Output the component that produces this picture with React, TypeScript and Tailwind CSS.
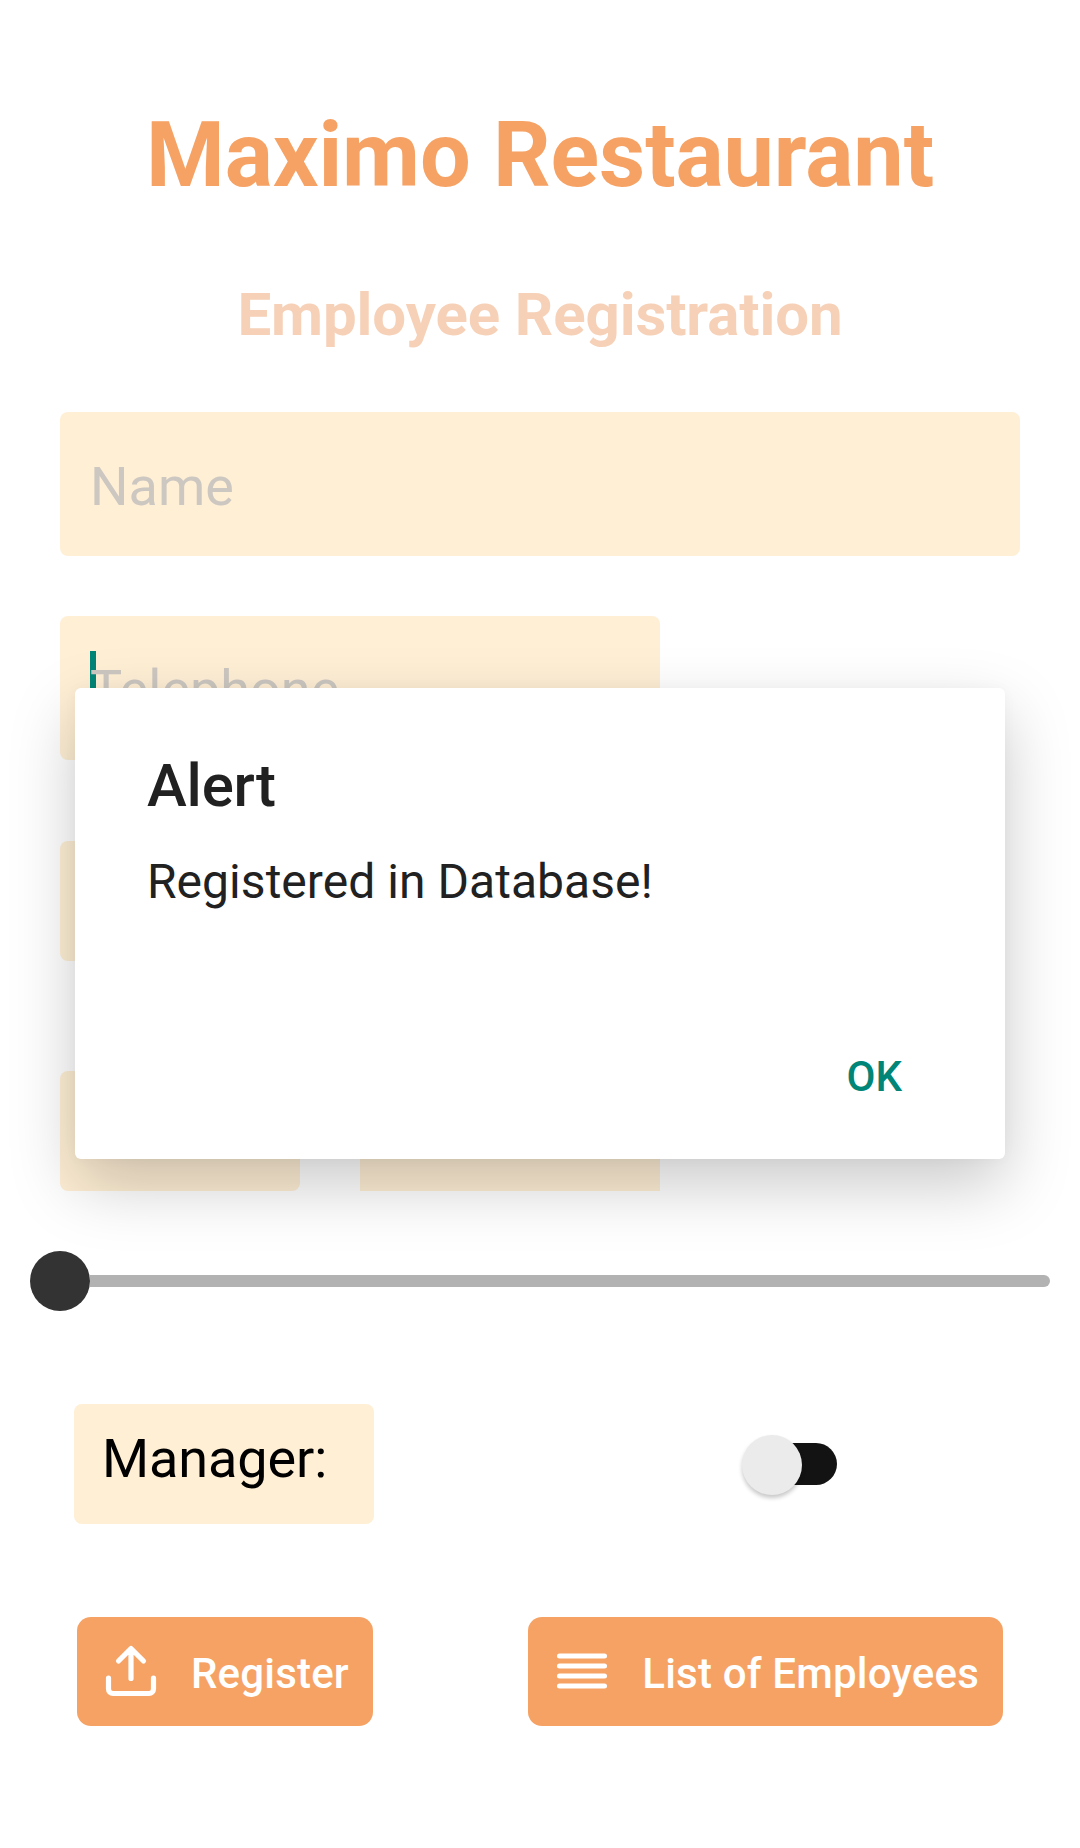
import type { ReactNode } from "react";

function UploadIcon() {
  return (
    <svg className="-mt-px" width="60" height="60" viewBox="0 0 60 60" fill="none" stroke="white" strokeWidth="5.2" strokeLinecap="round" strokeLinejoin="round">
      <path d="M7.5 37V48A4.5 4.5 0 0 0 12 52.5H48A4.5 4.5 0 0 0 52.5 48V37" />
      <path d="M30 37.5V8M17.5 20L30 7.5L42.5 20" />
      <path d="M30 9L25 14H35Z" fill="white" stroke="none" />
    </svg>
  );
}

function ListIcon() {
  return (
    <svg className="-mt-px" width="60" height="60" viewBox="0 0 60 60" fill="none" stroke="white" strokeWidth="5" strokeLinecap="round">
      <path d="M7.5 15H52.5M7.5 25H52.5M7.5 35H52.5M7.5 45H52.5" />
    </svg>
  );
}

function ActionButton({ icon, children }: { icon: ReactNode; children: ReactNode }) {
  return (
    <button className="flex h-[109px] items-center rounded-[14px] bg-[#f6a264] pr-6 pl-6 text-[42px] leading-[50px] font-medium tracking-[0.18px] text-white">
      {icon}
      <span className="ml-[30px] pt-1 whitespace-nowrap">{children}</span>
    </button>
  );
}

function Slider() {
  return (
    <div className="mx-[30px] mt-[60px] flex h-[60px] items-center">
      <div className="size-[60px] shrink-0 rounded-full bg-[#333333]" />
      <div className="h-3 flex-1 rounded-r-full bg-[#b2b2b2]" />
    </div>
  );
}

function Switch() {
  return (
    <div className="flex h-[42px] w-[90px] items-center rounded-full bg-[#131313]">
      <div className="mt-px -ml-[5px] size-[60px] shrink-0 rounded-full bg-[#ebebeb] shadow-[0_3px_4px_rgba(0,0,0,0.22)]" />
    </div>
  );
}

function AlertDialog() {
  return (
    <div className="absolute inset-x-[75px] top-[688px] flex h-[471px] flex-col rounded-[6px] bg-white px-[72px] text-[#212121] shadow-[0_26px_66px_rgba(0,0,0,0.21),0_0_14px_rgba(0,0,0,0.03)]">
      <h3 className="mt-[63px] text-[60px] leading-[70px] font-medium tracking-[-0.2px]">Alert</h3>
      <p className="mt-[33px] text-[48px] leading-[56px] tracking-[0.04px]">Registered in Database!</p>
      <button className="mt-[142px] mr-[31px] self-end text-[42px] leading-[50px] font-medium text-[#008577]">OK</button>
    </div>
  );
}

export default function App() {
  return (
    <main className="relative h-[1848px] w-[1080px] overflow-hidden bg-white font-['Roboto',sans-serif]">
      <h1 className="pt-[103px] text-center text-[90px] leading-[106px] font-bold tracking-[-0.1px] text-[#f6a264]">Maximo Restaurant</h1>
      <h2 className="mt-[71px] text-center text-[60px] leading-[70px] font-bold tracking-[-0.1px] text-[#f6d1b7]">Employee Registration</h2>

      <div className="mt-[62px] flex flex-col px-[60px]">
        <div className="flex h-36 items-center rounded-[8px] bg-[#ffefd5] px-[30px] pt-1 text-[54px] text-[#ccc7c1]">Name</div>
        <div className="mt-[60px] flex h-36 w-[600px] items-center rounded-[8px] bg-[#ffefd5] px-[30px] text-[54px] text-[#ccc7c1]">
          <span className="h-[74px] w-[6px] bg-[#008577]" />
          <span className="-ml-[6px] pt-[3px]">Telephone</span>
        </div>
        <div className="mt-[81px] h-[120px] w-[600px] rounded-[8px] bg-[#ffefd5]" />
        <div className="mt-[110px] flex gap-[60px]">
          <div className="h-[120px] w-[240px] rounded-[8px] bg-[#ffefd5]" />
          <div className="h-[120px] w-[300px] bg-[#ffefd5]" />
        </div>
      </div>

      <Slider />

      <div className="mt-[93px] flex items-center pl-[74px]">
        <div className="h-[120px] w-[300px] rounded-[8px] bg-[#ffefd5] pt-[23px] pl-[28px] text-[54px] leading-[64px] tracking-[-0.1px] text-black">Manager:</div>
        <div className="ml-[373px]">
          <Switch />
        </div>
      </div>

      <div className="mt-[93px] flex justify-between px-[77px]">
        <ActionButton icon={<UploadIcon />}>Register</ActionButton>
        <ActionButton icon={<ListIcon />}>List of Employees</ActionButton>
      </div>

      <AlertDialog />
    </main>
  );
}
